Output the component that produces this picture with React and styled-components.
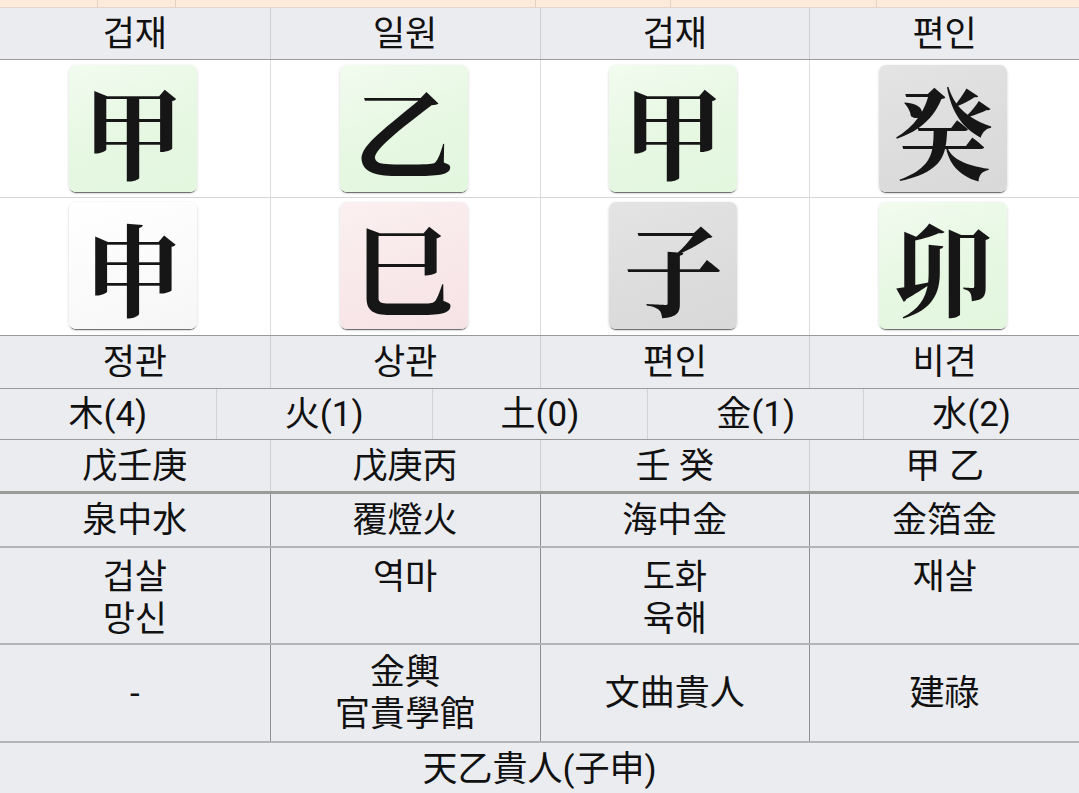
import React from "react";
import styled, { createGlobalStyle } from "styled-components";

const GlobalStyle = createGlobalStyle`
  html, body { margin: 0; padding: 0; background: #ffffff; }
  body {
    font-family: Roboto, "Noto Sans CJK KR", "Noto Sans CJK SC", sans-serif;
    color: #111;
    overflow: hidden;
  }
`;

const Page = styled.div`
  width: 1079px;
  display: flex;
  flex-direction: column;
`;

const TopStrip = styled.div`
  height: 7px;
  display: grid;
  grid-template-columns: 97px 78px 360px 135px 206px 1fr;
  background: #fcebdb;
  border-bottom: 1px solid #e2d6cc;
`;

const StripCell = styled.div`
  border-left: ${(p) => (p.$first ? "none" : "1px solid #e0d2c4")};
`;

const Row = styled.div`
  display: grid;
  grid-template-columns: ${(p) => `repeat(${p.$cols || 4}, 1fr)`};
  height: ${(p) => p.$h}px;
  background: ${(p) => p.$bg || "#ebecf0"};
  border-bottom: ${(p) => p.$bb || "1px solid #9a9a9a"};
  box-sizing: content-box;
`;

const Cell = styled.div`
  display: flex;
  flex-direction: column;
  align-items: center;
  justify-content: ${(p) => (p.$top ? "flex-start" : "center")};
  padding-top: ${(p) => (p.$top ? "9px" : "2px")};
  box-sizing: border-box;
  border-left: ${(p) => (p.$first ? "none" : `1px solid ${p.$line || "#cfcfd3"}`)};
  font-size: 35px;
  line-height: 42px;
  color: #111;
  text-align: center;
  white-space: pre;
  min-width: 0;
`;

const WideCell = styled(Cell)`
  grid-column: 1 / -1;
`;

const TileCell = styled.div`
  display: flex;
  justify-content: center;
  align-items: flex-start;
  padding-top: ${(p) => p.$pt}px;
  padding-right: 3px;
  border-left: ${(p) => (p.$first ? "none" : "1px solid #dcdcdc")};
  background: #ffffff;
`;

const tones = {
  green: "linear-gradient(160deg, #f2fbef 0%, #e6f7e2 55%, #e3f7df 100%)",
  gray: "linear-gradient(160deg, #e4e4e4 0%, #dcdcdc 60%, #d9d9d9 100%)",
  white: "linear-gradient(160deg, #ffffff 0%, #fafafa 60%, #f6f6f6 100%)",
  pink: "linear-gradient(160deg, #fbf0f1 0%, #f8e7e9 60%, #f6e3e6 100%)",
};

const Tile = styled.div`
  width: 128px;
  height: 127px;
  border-radius: 7px;
  background: ${(p) => tones[p.$tone]};
  box-shadow: 0 2px 1px -1px rgba(0, 0, 0, 0.55), 0 1px 3px rgba(0, 0, 0, 0.18);
  display: flex;
  align-items: center;
  justify-content: center;
  font-family: "Noto Serif CJK KR", "Noto Serif CJK SC", "Noto Sans CJK KR", serif;
  font-weight: 700;
  font-size: 100px;
  line-height: 1;
  color: #161616;
`;

const header = ["겁재", "일원", "겁재", "편인"];
const stems = [
  ["甲", "green"],
  ["乙", "green"],
  ["甲", "green"],
  ["癸", "gray"],
];
const branches = [
  ["申", "white"],
  ["巳", "pink"],
  ["子", "gray"],
  ["卯", "green"],
];
const gods = ["정관", "상관", "편인", "비견"];
const elements = ["木(4)", "火(1)", "土(0)", "金(1)", "水(2)"];
const hidden = ["戊壬庚", "戊庚丙", "壬 癸", "甲 乙"];
const napeum = ["泉中水", "覆燈火", "海中金", "金箔金"];
const sinsal = ["겁살\n망신", "역마", "도화\n육해", "재살"];
const gwiin = ["-", "金輿\n官貴學館", "文曲貴人", "建祿"];

export default function App() {
  return (
    <Page>
      <GlobalStyle />
      <TopStrip>
        {[0, 1, 2, 3, 4, 5].map((i) => (
          <StripCell key={i} $first={i === 0} />
        ))}
      </TopStrip>
      <Row $h={51}>
        {header.map((t, i) => (
          <Cell key={i} $first={i === 0}>{t}</Cell>
        ))}
      </Row>
      <Row $h={137} $bg="#fff" $bb="1px solid #d6d6d6">
        {stems.map(([c, tone], i) => (
          <TileCell key={i} $first={i === 0} $pt={5}>
            <Tile $tone={tone}>{c}</Tile>
          </TileCell>
        ))}
      </Row>
      <Row $h={137} $bg="#fff">
        {branches.map(([c, tone], i) => (
          <TileCell key={i} $first={i === 0} $pt={4}>
            <Tile $tone={tone}>{c}</Tile>
          </TileCell>
        ))}
      </Row>
      <Row $h={52}>
        {gods.map((t, i) => (
          <Cell key={i} $first={i === 0}>{t}</Cell>
        ))}
      </Row>
      <Row $h={50} $cols={5}>
        {elements.map((t, i) => (
          <Cell key={i} $first={i === 0} $line="#d4d4d8">{t}</Cell>
        ))}
      </Row>
      <Row $h={51} $bb="3px solid #9a9a9a">
        {hidden.map((t, i) => (
          <Cell key={i} $first={i === 0}>{t}</Cell>
        ))}
      </Row>
      <Row $h={52} $bb="2px solid #b4b4b8">
        {napeum.map((t, i) => (
          <Cell key={i} $first={i === 0} $line="#8e8e8e">{t}</Cell>
        ))}
      </Row>
      <Row $h={95} $bb="2px solid #b4b4b8">
        {sinsal.map((t, i) => (
          <Cell key={i} $first={i === 0} $top $line="#8e8e8e">{t}</Cell>
        ))}
      </Row>
      <Row $h={96} $bb="2px solid #b4b4b8">
        {gwiin.map((t, i) => (
          <Cell key={i} $first={i === 0} $line="#8e8e8e">{t}</Cell>
        ))}
      </Row>
      <Row $h={52} $bb="none">
        <WideCell $first>天乙貴人(子申)</WideCell>
      </Row>
    </Page>
  );
}
